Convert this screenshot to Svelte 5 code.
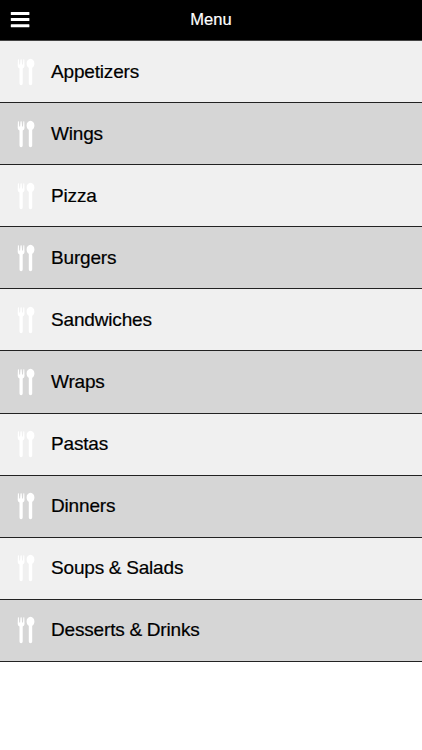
<script>
  const items = ['Appetizers', 'Wings', 'Pizza', 'Burgers', 'Sandwiches', 'Wraps', 'Pastas', 'Dinners', 'Soups & Salads', 'Desserts & Drinks'];
</script>

<div class="app">
  <header>
    <button aria-label="Open navigation">
      <svg width="20" height="18" viewBox="0 0 20 18" fill="#fff">
        <rect x="0.8" y="1" width="18.6" height="3" rx="0.5" />
        <rect x="0.8" y="7.1" width="18.6" height="3" rx="0.5" />
        <rect x="0.8" y="13.2" width="18.6" height="3" rx="0.5" />
      </svg>
    </button>
    <h1>Menu</h1>
    <span></span>
  </header>
  <ul>
    {#each items as item}
      <li>
        <svg width="18" height="28" viewBox="0 0 18 28" fill="#fff">
          <path d="M.9 1.6Q1.4.8 1.9 1.6L2.2 6.6H3.1L3.5 1.6Q4.1.8 4.7 1.6L5.1 6.6H6L6.3 1.6Q6.8.8 7.3 1.6L7.5 8Q7.5 9.6 5.7 10.4V25.6Q5.7 27.2 4.1 27.2T2.5 25.6V10.4Q.7 9.6.7 8Z" />
          <path d="M13.5.8C15.8.8 17.4 3 17.4 5.4C17.4 7.5 16.4 9 15.2 9.8V25.6Q15.2 27.2 13.5 27.2T11.8 25.6V9.8C10.6 9 9.6 7.5 9.6 5.4C9.6 3 11.2.8 13.5.8Z" />
        </svg>
        <span>{item}</span>
      </li>
    {/each}
  </ul>
</div>

<style>
  .app { min-height: 750px; background: #fff; font-family: "Liberation Sans", Arial, sans-serif; }
  header { height: 41px; box-sizing: border-box; border-bottom: 1px solid #444; padding-bottom: 1px; background: #000; display: grid; grid-template-columns: 40px 1fr 40px; align-items: center; }
  button { border: 0; background: none; padding: 1px 0 0 10px; display: flex; }
  h1 { margin: 0; color: #fff; font-size: 16.5px; font-weight: 400; text-align: center; -webkit-text-stroke: 0.2px #fff; }
  ul { list-style: none; margin: 0; padding: 0; }
  li { height: 62.1px; box-sizing: border-box; border-bottom: 1px solid #222; background: #f0f0f0; display: flex; align-items: center; padding-left: 17px; font-size: 19px; color: #000; }
  li:nth-child(even) { background: #d6d6d6; }
  li span { margin-left: 16px; letter-spacing: -0.17px; word-spacing: -0.3px; -webkit-text-stroke: 0.2px #000; }
</style>
